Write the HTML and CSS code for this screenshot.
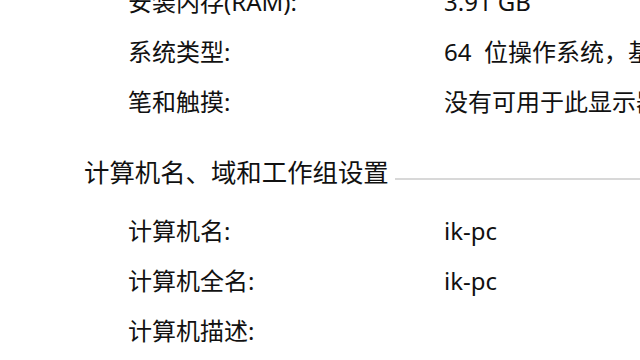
FILE: index.html
```html
<!DOCTYPE html>
<html lang="zh-CN">
<head>
    <meta charset="UTF-8"/>
    <meta name="viewport" content="width=device-width, initial-scale=1.0">
    <title>系统</title>
    <link rel="stylesheet" href="styles.css">
</head>

<body>
    <main class="panel">
        <section class="group">
            <div class="row">
                <span class="label">安装内存(RAM):</span>
                <span class="value">3.91 GB</span>
            </div>
            <div class="row">
                <span class="label">系统类型:</span>
                <span class="value">64&nbsp; 位操作系统，基于 x64 的处理器</span>
            </div>
            <div class="row">
                <span class="label">笔和触摸:</span>
                <span class="value">没有可用于此显示器的笔或触控输入</span>
            </div>
        </section>

        <section class="group group-computer">
            <h2 class="group-title">
                <span>计算机名、域和工作组设置</span>
                <span class="rule"></span>
            </h2>
            <div class="row">
                <span class="label">计算机名:</span>
                <span class="value">ik-pc</span>
            </div>
            <div class="row">
                <span class="label">计算机全名:</span>
                <span class="value">ik-pc</span>
            </div>
            <div class="row">
                <span class="label">计算机描述:</span>
                <span class="value"></span>
            </div>
        </section>
    </main>
</body>
</html>
```

FILE: styles.css
```css
* {
margin: 0;
padding: 0;
box-sizing: border-box;
}

html, body {
    height: 100%;
    overflow: hidden;
}

body {
    font-family: 'Noto Sans', 'Noto Sans CJK SC', sans-serif;
    background-color: #fff;
    color: #111;
}

.panel {
    margin-top: -23px;
    width: 640px;
}

.group-computer {
    margin-top: 19px;
}

.group-title {
    display: flex;
    align-items: center;
    height: 50px;
    padding-left: 84px;
    font-size: 25.4px;
    font-weight: normal;
    white-space: nowrap;
    margin-bottom: 10px;
}

.rule {
    flex: 1;
    height: 2px;
    margin-left: 6px;
    margin-top: 16px;
    background-color: #d8d8d8;
}

.row {
    display: flex;
    height: 50px;
    line-height: 50px;
    font-size: 24px;
    padding-left: 128px;
    white-space: nowrap;
    overflow: hidden;
}

.label {
    width: 316px;
    flex-shrink: 0;
}

.value {
    flex-shrink: 0;
}
```
